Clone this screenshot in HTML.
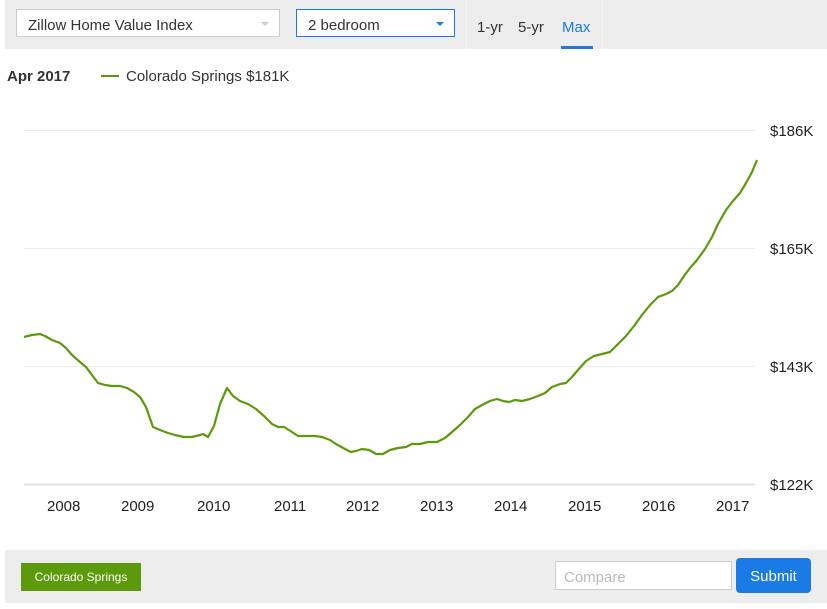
<!DOCTYPE html>
<html><head><style>
body{margin:0;width:827px;height:609px;background:#fff;font-family:"Liberation Sans",sans-serif;position:relative;overflow:hidden}
.bar{position:absolute;left:5px;top:0;width:822px;height:49px;background:#ededed}
.sel{position:absolute;top:9px;height:28px;background:#fff;box-sizing:border-box;font-size:15px;color:#333;line-height:32px;padding-left:11px}
.s1{left:16px;width:264px;border:1px solid #ccc}
.s2{left:296px;width:159px;border:1px solid #1a7ae6}
.tri{position:absolute;right:10px;top:12px;width:0;height:0;border-left:4px solid transparent;border-right:4px solid transparent}
.sep{position:absolute;top:0;width:1px;height:49px;background:#f7f7f7}
.tab{position:absolute;top:19px;font-size:15px;color:#333}
.yl{position:absolute;left:770px;font-size:15px;color:#222}
.xl{position:absolute;top:498px;font-size:15px;color:#222}
</style></head><body>
<div class="bar"></div>
<div class="sel s1">Zillow Home Value Index<div class="tri" style="border-top:4px solid #ccc"></div></div>
<div class="sel s2">2 bedroom<div class="tri" style="border-top:4px solid #1a7ae6"></div></div>
<div class="sep" style="left:466px"></div><div class="sep" style="left:602px"></div>
<div class="tab" style="left:477px">1-yr</div>
<div class="tab" style="left:518px">5-yr</div>
<div class="tab" style="left:562px;color:#1a7ae6">Max</div>
<div style="position:absolute;left:561px;top:46px;width:32px;height:3px;background:#1a7ae6"></div>
<div style="position:absolute;left:7px;top:68px;font-size:15px;font-weight:bold;color:#333">Apr 2017</div>
<div style="position:absolute;left:101px;top:75px;width:18px;height:2px;background:#5a9a0a"></div>
<div style="position:absolute;left:126px;top:68px;font-size:15px;color:#333">Colorado Springs $181K</div>
<svg style="position:absolute;left:0;top:0" width="827" height="609">
<g stroke="#ececec" stroke-width="1"><line x1="24" y1="130.5" x2="755" y2="130.5"/><line x1="24" y1="248.5" x2="755" y2="248.5"/><line x1="24" y1="366.5" x2="755" y2="366.5"/></g>
<line x1="24" y1="484.5" x2="755" y2="484.5" stroke="#e2e2e2" stroke-width="2"/>
<polyline fill="none" stroke="#5c9a0c" stroke-width="2.2" stroke-linejoin="round" points="24,337 32,335 40,334 45,336 52,340 60,343 66,348 72,355 80,362 86,367 92,375 98,383 105,385 112,386 120,386 127,388 134,392 140,397 146,407 153,427 160,430 168,433 175,435 184,437 192,437 200,435 203,434 208,437 214,426 220,404 227,388 233,396 240,401 248,404 256,409 264,416 272,424 278,427 284,427 292,432 298,436 305,436 315,436 322,437 330,440 336,444 345,449 351,452 356,451 362,449 369,450 376,454 383,454 390,450 398,448 406,447 412,444 420,444 428,442 437,442 445,438 452,432 460,425 468,417 475,409 482,405 490,401 497,399 503,401 509,402 515,400 522,401 530,399 538,396 545,393 552,387 560,384 566,383 572,377 578,370 586,361 594,356 602,354 610,352 618,344 626,336 634,326 642,315 650,305 658,297 666,294 672,291 678,285 684,276 690,268 697,260 705,249 712,237 718,224 726,210 733,201 740,193 746,183 752,172 757,160"/>
</svg>
<div class="yl" style="top:123px">$186K</div>
<div class="yl" style="top:241px">$165K</div>
<div class="yl" style="top:359px">$143K</div>
<div class="yl" style="top:477px">$122K</div>
<div class="xl" style="left:47px">2008</div>
<div class="xl" style="left:121px">2009</div>
<div class="xl" style="left:197px">2010</div>
<div class="xl" style="left:274px">2011</div>
<div class="xl" style="left:346px">2012</div>
<div class="xl" style="left:420px">2013</div>
<div class="xl" style="left:494px">2014</div>
<div class="xl" style="left:568px">2015</div>
<div class="xl" style="left:642px">2016</div>
<div class="xl" style="left:716px">2017</div>
<div style="position:absolute;left:5px;top:550px;width:822px;height:53px;background:#ededed"></div>
<div style="position:absolute;left:21px;top:563px;width:120px;height:28px;background:#5c9a0c;color:#fff;font-size:12px;line-height:28px;text-align:center">Colorado Springs</div>
<div style="position:absolute;left:555px;top:561px;width:177px;height:29px;box-sizing:border-box;border:1px solid #ccc;background:#fff;color:#bbb;font-size:15px;line-height:31px;padding-left:8px">Compare</div>
<div style="position:absolute;left:736px;top:558px;width:75px;height:35px;border-radius:4px;background:#1a7ae6;color:#fff;font-size:15px;line-height:38px;text-align:center">Submit</div>
</body></html>
